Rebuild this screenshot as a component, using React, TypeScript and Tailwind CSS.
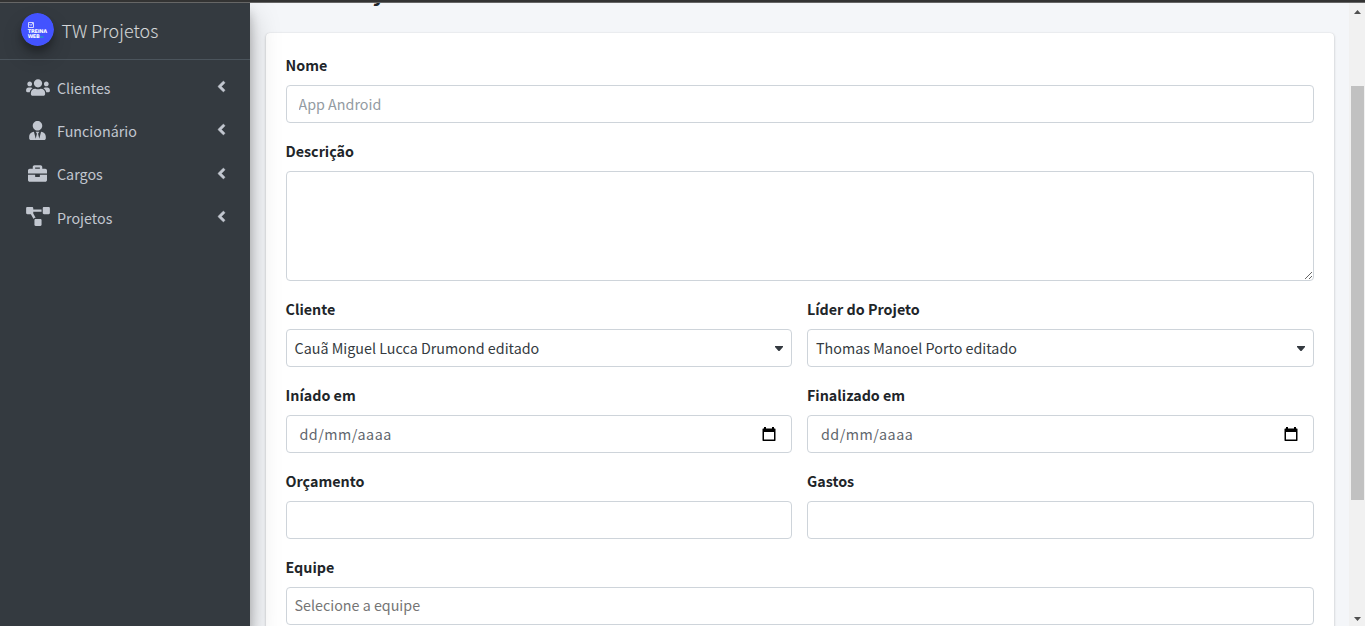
import type { ReactNode } from 'react';
import { FaAngleLeft, FaBriefcase, FaProjectDiagram, FaUserTie, FaUsers } from 'react-icons/fa';

const menu = [
  { label: 'Clientes', icon: <FaUsers className="h-[19px] w-6" /> },
  { label: 'Funcionário', icon: <FaUserTie className="h-[19px] w-[17px]" /> },
  { label: 'Cargos', icon: <FaBriefcase className="h-[19px] w-[19px]" /> },
  { label: 'Projetos', icon: <FaProjectDiagram className="h-[19px] w-6" /> },
];

const box =
  'flex h-[38px] w-full items-center rounded-[4px] border border-[#ced4da] bg-white text-[14.3px] leading-6 outline-none';

function Field({ label, children }: { label: string; children: ReactNode }) {
  return (
    <div className="mb-4 min-w-0 flex-1">
      <label className="mb-2 block h-6 text-[14.3px] leading-6 font-bold text-[#212529]">{label}</label>
      {children}
    </div>
  );
}

function Select({ value }: { value: string }) {
  return (
    <div className={`${box} justify-between pr-2 pl-2 text-[#343a40]`}>
      <span className="tracking-[0.015px]">{value}</span>
      <svg className="h-[5px] w-2" viewBox="0 0 8 5">
        <path d="M0 0h8v1L4.5 5h-1L0 1z" fill="#343a40" />
      </svg>
    </div>
  );
}

function DateField() {
  return (
    <div className={`${box} justify-between pr-[15px] pl-[13px] text-[#5f666d]`}>
      <span className="tracking-[0.5px]">dd/mm/aaaa</span>
      <svg className="h-[15px] w-[14px]" viewBox="0 0 14 15">
        <path d="M2 0h2v1.5h6V0h2v1.5h1L13.5 2v11.5l-.5.5H1l-.5-.5V2l.5-.5h1zM2 5v7.5h10V5z" fill="#000" fillRule="evenodd" />
      </svg>
    </div>
  );
}

function Sidebar() {
  return (
    <aside className="z-10 w-[250px] shrink-0 bg-[#343a40] text-[#c2c7d0] shadow-[0_14px_28px_rgba(0,0,0,0.25),0_10px_10px_rgba(0,0,0,0.22)]">
      <div className="flex h-[57px] items-center border-b border-[#4b545c] pl-[21px]">
        <svg className="mb-[3px] h-[33px] w-[33px] rounded-full shadow-[0_10px_20px_rgba(0,0,0,0.19),0_6px_6px_rgba(0,0,0,0.23)]" viewBox="0 0 33 33">
          <circle cx="16.5" cy="16.5" r="16.5" fill="#4353ff" />
          <path d="M7.5 9.5h5v5h-5zM8.5 11l1.5 1.5L12 10" fill="none" stroke="#d3d8ff" strokeWidth="1" />
          <text x="6.7" y="20" fontSize="5" fontWeight="700" fill="#fff" textLength="19.5" fontFamily="DejaVu Sans, sans-serif">TREINA</text>
          <text x="6.7" y="24.6" fontSize="5" fontWeight="700" fill="#fff" textLength="12" fontFamily="DejaVu Sans, sans-serif">WEB</text>
          <path d="M19 24h3.5" stroke="#13b9a0" strokeWidth="1.2" />
        </svg>
        <span className="mb-0.5 ml-[7.5px] text-[17.9px] leading-[30px] font-light tracking-[0.04px] text-white/80">TW Projetos</span>
      </div>
      <nav className="pt-2">
        {menu.map((item) => (
          <a key={item.label} className="mb-[3.2px] flex h-10 items-center pr-[23px] pl-[24.5px]">
            <span className="mb-0.5 flex w-[26px] justify-center">{item.icon}</span>
            <span className="ml-[6.5px] flex-1 text-[14.3px] leading-6">{item.label}</span>
            <FaAngleLeft className="mb-[2.4px] h-[17px] w-[11px]" stroke="currentColor" strokeWidth="12" />
          </a>
        ))}
      </nav>
    </aside>
  );
}

function Scrollbar() {
  return (
    <div className="flex w-4 shrink-0 flex-col items-center bg-[#f1f1f1]">
      <svg className="mt-[7px] h-1 w-[7px] shrink-0" viewBox="0 0 7 4">
        <path d="M3.5 0L7 4H0z" fill="#505050" />
      </svg>
      <div className="mt-[72px] ml-px h-[414px] w-[13px] shrink-0 bg-[#c1c1c1]" />
      <svg className="mt-auto mb-[5px] h-1 w-[7px] shrink-0" viewBox="0 0 7 4">
        <path d="M0 0h7L3.5 4z" fill="#505050" />
      </svg>
    </div>
  );
}

export default function App() {
  return (
    <div className="flex h-[626px] w-[1365px] flex-col overflow-hidden bg-[#f4f6f9] font-['Noto_Sans_CJK_SC',sans-serif]">
      <div className="h-[3px] shrink-0 border-b border-[#666] bg-[#333]" />
      <div className="flex min-h-0 flex-1 overflow-hidden">
        <Sidebar />
        <main className="flex h-[623px] min-w-0 flex-1 flex-col overflow-hidden px-[15.5px]">
          <h1 className="-mt-[31px] mb-[27px] h-[34px] shrink-0 text-[25.7px] leading-[34px] font-medium tracking-[-0.4px] text-[#212529]">Novo Projeto</h1>
          <section className="h-[640px] shrink-0 rounded-[4px] bg-white p-5 shadow-[0_0_1px_rgba(0,0,0,0.125),0_1px_3px_rgba(0,0,0,0.2)]">
            <Field label="Nome">
              <input className={`${box} px-3 pb-0.5 text-[#495057] placeholder:text-[#939ba2]`} placeholder="App Android" />
            </Field>
            <Field label="Descrição">
              <textarea className="block h-[110px] w-full resize rounded-[4px] border border-[#ced4da] bg-white px-3 py-1.5 outline-none" />
            </Field>
            <div className="flex gap-[15px]">
              <Field label="Cliente">
                <Select value="Cauã Miguel Lucca Drumond editado" />
              </Field>
              <Field label="Líder do Projeto">
                <Select value="Thomas Manoel Porto editado" />
              </Field>
            </div>
            <div className="flex gap-[15px]">
              <Field label="Iníado em">
                <DateField />
              </Field>
              <Field label="Finalizado em">
                <DateField />
              </Field>
            </div>
            <div className="flex gap-[15px]">
              <Field label="Orçamento">
                <input className={`${box} px-3`} />
              </Field>
              <Field label="Gastos">
                <input className={`${box} px-3`} />
              </Field>
            </div>
            <Field label="Equipe">
              <input className={`${box} px-2 pb-[3px] placeholder:text-[#757575]`} placeholder="Selecione a equipe" />
            </Field>
          </section>
        </main>
        <Scrollbar />
      </div>
    </div>
  );
}
